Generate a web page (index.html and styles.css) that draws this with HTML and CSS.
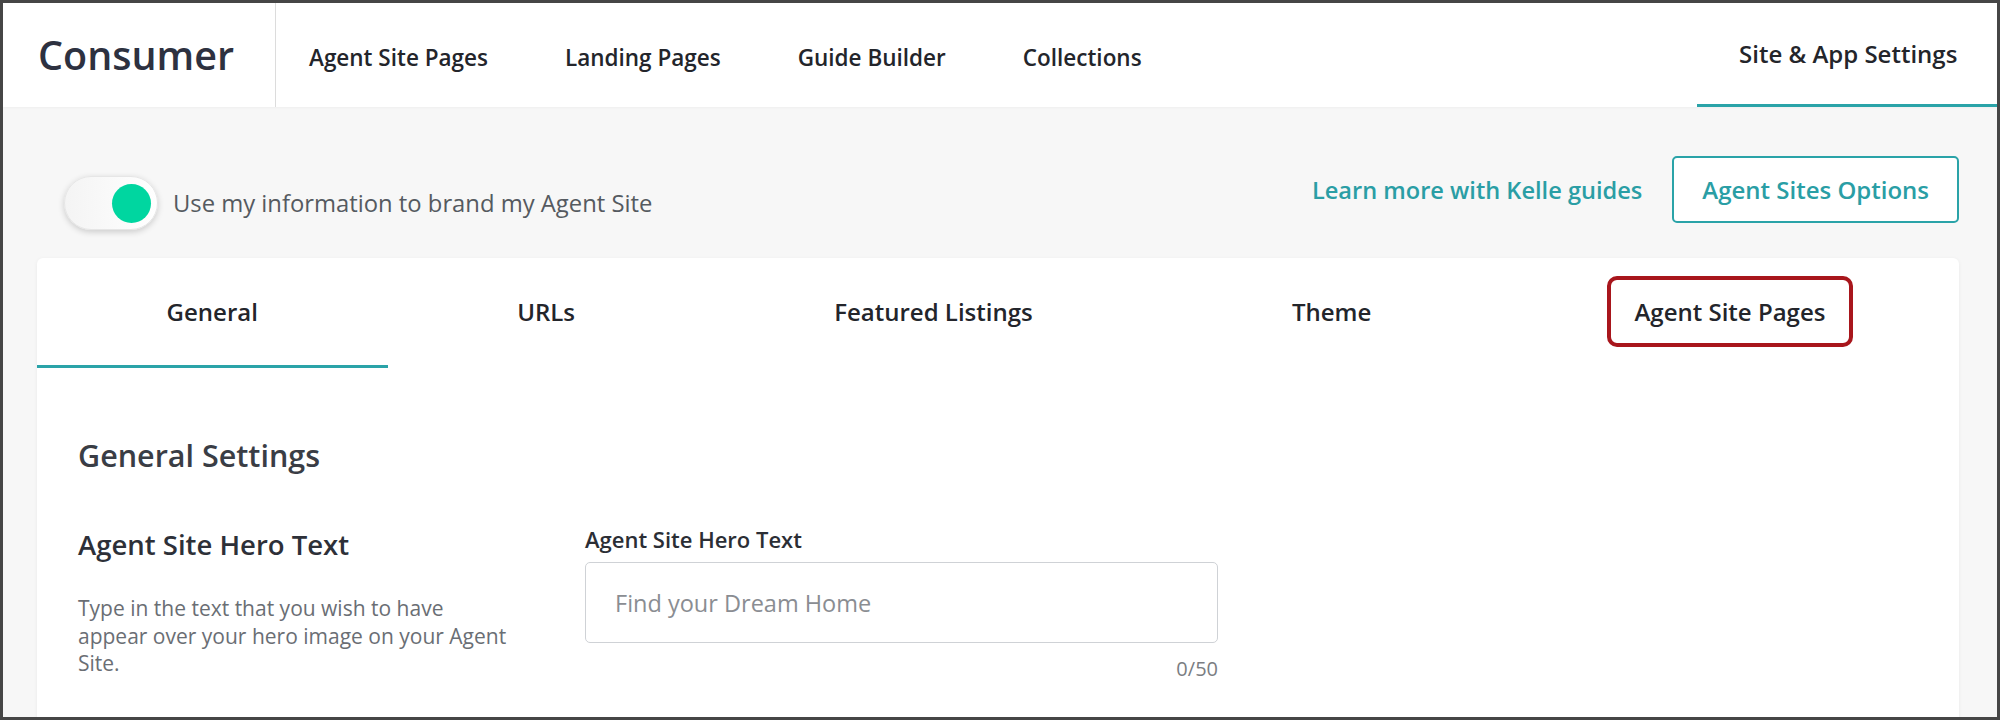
FILE: index.html
```html
<!DOCTYPE html>
<html lang="en">
<head>
  <meta charset="UTF-8">
  <meta name="viewport" content="width=device-width, initial-scale=1.0">
  <title>Consumer - Site &amp; App Settings</title>
  <link rel="stylesheet" href="styles.css">
</head>
<body>
  <div class="frame">
    <!-- Top navigation -->
    <header class="topnav">
      <div class="brand">Consumer</div>
      <nav class="nav-links">
        <a class="nav-link" href="#">Agent Site Pages</a>
        <a class="nav-link" href="#">Landing Pages</a>
        <a class="nav-link" href="#">Guide Builder</a>
        <a class="nav-link" href="#">Collections</a>
      </nav>
      <a class="nav-link nav-active" href="#">Site &amp; App Settings</a>
    </header>

    <main class="page">
      <!-- Branding toggle and actions -->
      <div class="toolbar">
        <label class="brand-toggle">
          <span class="switch"><span class="knob"></span></span>
          <span class="toggle-label">Use my information to brand my Agent Site</span>
        </label>
        <div class="actions">
          <a class="guide-link" href="#">Learn more with Kelle guides</a>
          <button class="btn-outline" type="button">Agent Sites Options</button>
        </div>
      </div>

      <section class="card">
        <div class="tabs">
          <div class="tab tab-active">General</div>
          <div class="tab">URLs</div>
          <div class="tab">Featured Listings</div>
          <div class="tab">Theme</div>
          <div class="tab"><span class="highlight">Agent Site Pages</span></div>
        </div>

        <div class="card-body">
          <h2 class="section-title">General Settings</h2>

          <div class="setting-row">
            <div class="setting-info">
              <h3 class="setting-title">Agent Site Hero Text</h3>
              <p class="setting-desc">Type in the text that you wish to have appear over your hero image on your Agent Site.</p>
            </div>
            <div class="setting-field">
              <div class="field-label">Agent Site Hero Text</div>
              <input class="text-input" type="text" placeholder="Find your Dream Home">
              <div class="field-count">0/50</div>
            </div>
          </div>
        </div>
      </section>
    </main>
  </div>
</body>
</html>
```

FILE: styles.css
```css
body {
  margin: 0;
  padding: 0;
  font-family: "Open Sans", "Noto Sans", sans-serif;
  color: #2b2f38;
  background: #ffffff;
}

.frame {
  box-sizing: border-box;
  width: 2000px;
  height: 720px;
  border: 3px solid #464646;
  background-color: #f7f7f7;
  overflow: hidden;
}

/* Top navigation */
.topnav {
  display: flex;
  align-items: stretch;
  height: 104px;
  background-color: #ffffff;
  box-shadow: 0 1px 3px rgba(0, 0, 0, 0.04);
}

.brand {
  display: flex;
  align-items: center;
  box-sizing: border-box;
  width: 273px;
  padding-left: 35px;
  border-right: 1px solid #dcdcdc;
  font-size: 39.5px;
  font-weight: 600;
  color: #2d3140;
}

.nav-links {
  display: flex;
  align-items: center;
  gap: 77px;
  padding-left: 33px;
}

.nav-link {
  display: flex;
  align-items: center;
  font-size: 22.5px;
  font-weight: 600;
  color: #23252b;
  text-decoration: none;
  padding-top: 4px;
}

.nav-active {
  margin-left: auto;
  box-sizing: border-box;
  width: 300px;
  padding: 0 0 0 42px;
  border-bottom: 3px solid #2aa3a8;
  height: 104px;
  font-size: 24px;
}

/* Toolbar with toggle */
.page {
  padding: 0 38px 0 34px;
}

.toolbar {
  display: flex;
  align-items: flex-start;
  justify-content: space-between;
  padding: 49px 0 28px;
}

.brand-toggle {
  display: flex;
  align-items: center;
  gap: 15px;
  margin: 20px 0 0 27px;
}

.switch {
  box-sizing: border-box;
  display: flex;
  align-items: center;
  justify-content: flex-end;
  width: 94px;
  height: 54px;
  padding-right: 6px;
  border: 1px solid #e6e6e6;
  border-radius: 27px;
  background: linear-gradient(90deg, #f4f4f4, #ffffff);
  box-shadow: 0 2px 6px rgba(0, 0, 0, 0.18);
}

.knob {
  width: 39px;
  height: 39px;
  border-radius: 50%;
  background-color: #00d6a0;
}

.toggle-label {
  font-size: 23.8px;
  color: #555a60;
}

.actions {
  display: flex;
  align-items: center;
  gap: 30px;
}

.guide-link {
  font-size: 23.6px;
  font-weight: 600;
  color: #2a9ea5;
  text-decoration: none;
}

.btn-outline {
  box-sizing: border-box;
  height: 67px;
  padding: 0 28px;
  border: 2px solid #2aa3a8;
  border-radius: 5px;
  background-color: #ffffff;
  font-family: inherit;
  font-size: 24px;
  font-weight: 600;
  color: #2a9ea5;
}

/* Settings card */
.card {
  height: 470px;
  background-color: #ffffff;
  border-radius: 6px;
  box-shadow: 0 1px 4px rgba(0, 0, 0, 0.06);
}

.tabs {
  display: flex;
}

.tab {
  flex: 1 1 auto;
  display: flex;
  align-items: center;
  justify-content: center;
  box-sizing: border-box;
  height: 110px;
  border-bottom: 3px solid transparent;
  font-size: 24px;
  font-weight: 600;
  color: #23252b;
}

.tab-active {
  border-bottom-color: #2aa3a8;
}

/* Red annotation around the tab label */
.highlight {
  padding: 15px 24px;
  margin: -15px -24px;
  border: 4px solid #a8161c;
  border-radius: 10px;
}

.card-body {
  padding: 0 41px;
}

.section-title {
  margin: 66px 0 0;
  font-size: 30.5px;
  font-weight: 600;
  color: #3a3d45;
}

.setting-row {
  display: flex;
  gap: 70px;
  margin-top: 50px;
}

.setting-info {
  width: 437px;
}

.setting-title {
  margin: 0;
  font-size: 27.5px;
  font-weight: 600;
  color: #2d3038;
}

.setting-desc {
  margin: 32px 0 0;
  font-size: 21px;
  line-height: 27.5px;
  color: #6a6e74;
}

.setting-field {
  display: flex;
  flex-direction: column;
  width: 633px;
  margin-top: -2px;
}

.field-label {
  font-size: 22px;
  font-weight: 600;
  color: #2b2e35;
}

.text-input {
  box-sizing: border-box;
  height: 81px;
  margin-top: 8px;
  padding: 0 29px;
  border: 1px solid #cfd2d6;
  border-radius: 5px;
  font-family: inherit;
  font-size: 23.5px;
  color: #333;
}

.text-input::placeholder {
  color: #8a8d92;
}

.field-count {
  align-self: flex-end;
  margin-top: 12px;
  font-size: 20px;
  color: #7a7d82;
}
```
